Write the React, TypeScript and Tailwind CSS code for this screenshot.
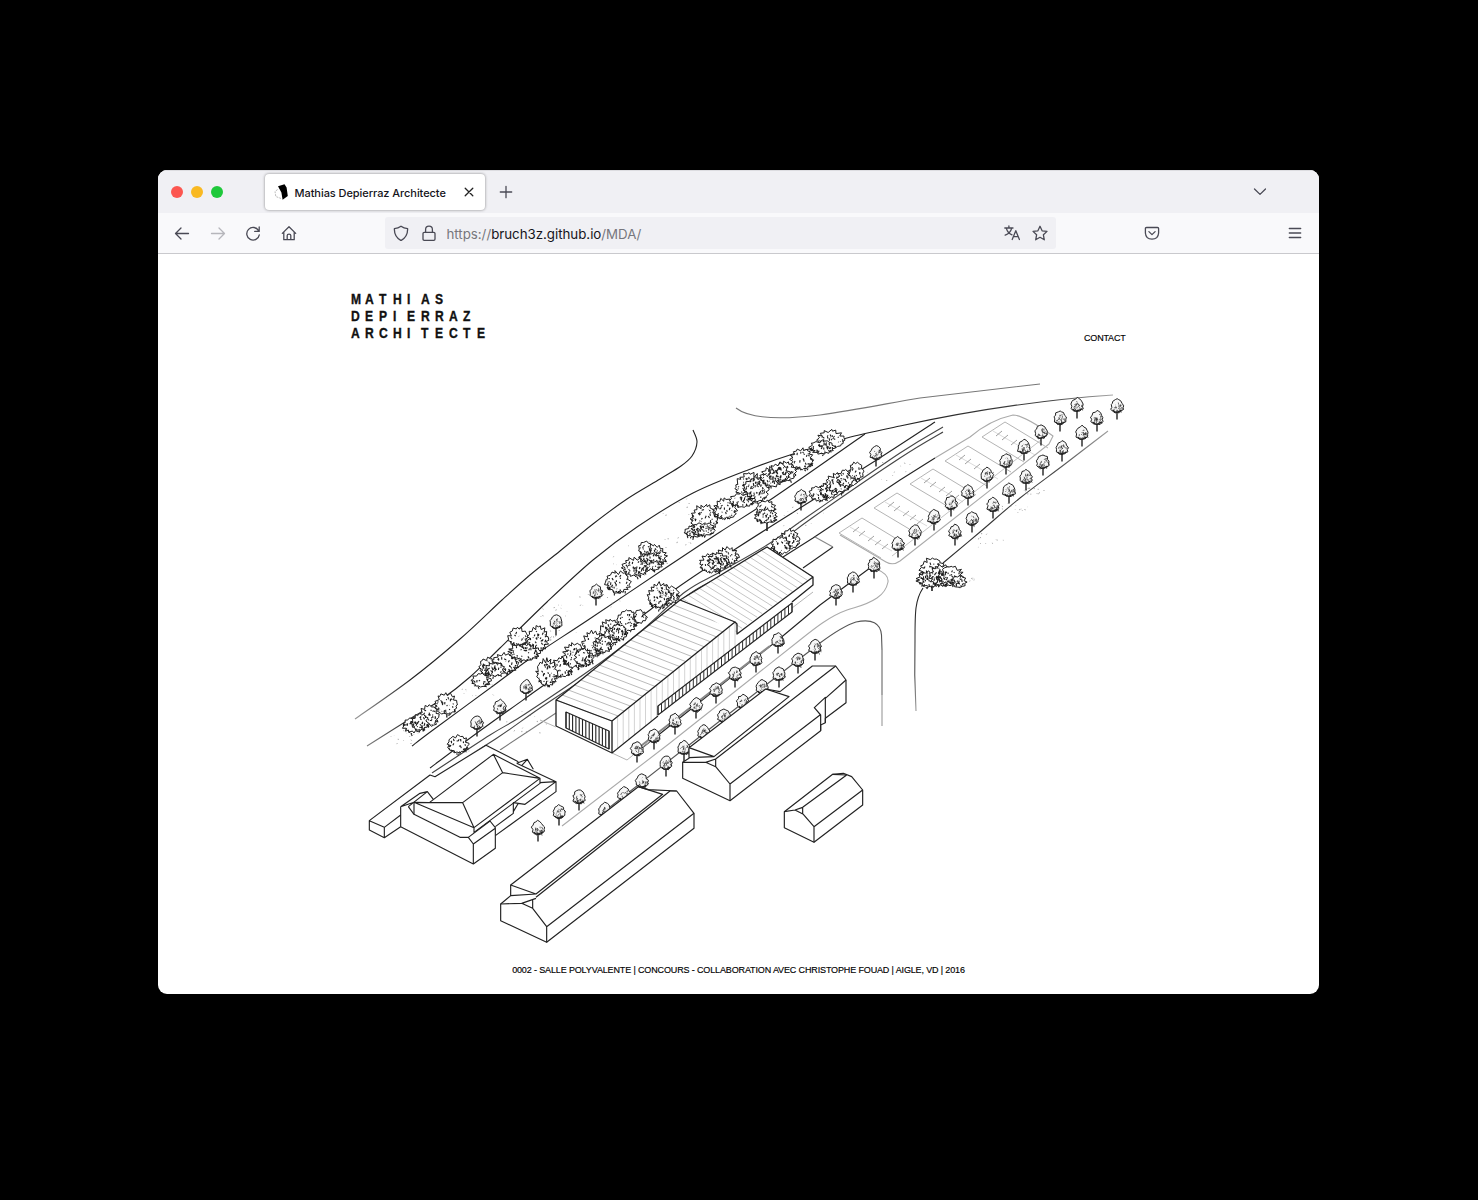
import React from "react";

type Blob = [number, number, number, number];
type Pt = [number, number];

function makeRandom(seed: number) {
  let s = seed;
  for (let i = 0; i < 3; i++) s = (s * 16807) % 2147483647;
  return () => {
    s = (s * 16807) % 2147483647;
    return s / 2147483647;
  };
}

const n = (v: number) => v.toFixed(1);

/* Small street trees, given by the centre of the crown. */
const treesBack: Pt[] = [
  [876, 453], [1077, 405], [1060, 418], [1117, 406], [1097, 418], [1082, 433], [1041, 432], [1062, 448],
  [1024, 447], [1043, 462], [1006, 461], [1026, 477], [987, 475], [1009, 490], [968, 492], [993, 505],
  [951, 503], [972, 519], [934, 517], [955, 532], [915, 532], [898, 544], [874, 565], [853, 579],
  [836, 592], [801, 497], [596, 592], [556, 622], [526, 687], [500, 707], [477, 723], [778, 640],
  [756, 659], [735, 674], [716, 690], [696, 705], [675, 721], [654, 736], [637, 749], [815, 647],
  [798, 660], [779, 674], [762, 687], [743, 702], [724, 716], [704, 732], [684, 748], [666, 763],
  [642, 781], [624, 794], [605, 810], [579, 797], [559, 812], [538, 828],
];

/* Bushes as overlapping clumps: centre and radii. */
const bushes: Blob[] = [
  [429, 717, 9, 10], [413, 726, 10, 7], [420, 723, 8, 8], [446, 705, 11, 10], [458, 745, 10, 8],
  [488, 667, 8, 8], [505, 664, 13, 9], [495, 670, 10, 6], [481, 681, 9, 6], [518, 638, 9, 9], [538, 640, 10, 12], [524, 653, 15, 8],
  [562, 668, 10, 9], [547, 674, 10, 13], [575, 657, 12, 12], [593, 645, 10, 12], [584, 658, 9, 8], [611, 633, 11, 12], [603, 645, 9, 8],
  [627, 622, 10, 10], [618, 633, 9, 7], [640, 617, 6, 6], [667, 596, 12, 9], [659, 597, 11, 12], [727, 557, 11, 8], [712, 564, 12, 9], [718, 562, 10, 8],
  [653, 557, 13, 11], [645, 549, 6, 6], [650, 563, 12, 8], [635, 568, 12, 9], [618, 583, 12, 10], [790, 540, 9, 9], [781, 546, 9, 8],
  [704, 520, 13, 13], [694, 532, 9, 5], [703, 530, 11, 6], [725, 510, 11, 10], [750, 488, 14, 13], [756, 491, 12, 11], [742, 501, 12, 6],
  [785, 472, 11, 9], [772, 478, 11, 9], [779, 474, 10, 9], [802, 460, 11, 10], [831, 440, 13, 8], [822, 448, 12, 6],
  [820, 494, 10, 7], [829, 491, 9, 7], [838, 484, 12, 9], [847, 479, 10, 8], [856, 472, 7, 8], [766, 510, 9, 8], [766, 517, 11, 6],
  [932, 571, 12, 11], [930, 580, 13, 7], [942, 577, 12, 10], [951, 577, 12, 9], [959, 582, 7, 5],
];

/* Scattered dots of grass, centre and spread. */
const grass: Blob[] = [
  [405, 738, 18, 8], [480, 690, 24, 7], [555, 612, 20, 8], [600, 600, 26, 8], [690, 510, 30, 12], [530, 722, 30, 12],
  [640, 560, 30, 20], [965, 580, 12, 5], [985, 540, 20, 8], [1015, 508, 16, 6], [1035, 490, 12, 5], [800, 515, 30, 14],
  [890, 470, 25, 12], [480, 750, 18, 8], [560, 635, 20, 6], [670, 545, 25, 10],
];

function outline(cx: number, cy: number, rx: number, ry: number, seed: number, steps: number, rough: number) {
  const r = makeRandom(seed);
  let d = "";
  for (let i = 0; i < steps; i++) {
    const a = (i / steps) * Math.PI * 2 + (r() - 0.5) * 0.18;
    const up = Math.sin(a) < 0 ? 1.12 : 0.9;
    const k = 1.06 - (i % 2) * rough * (0.4 + r() * 1.1) - r() * 0.12;
    d += `${i ? "L" : "M"}${n(cx + Math.cos(a) * rx * k)} ${n(cy + Math.sin(a) * ry * k * up)}`;
  }
  return d + "Z";
}

function speckle(cx: number, cy: number, rx: number, ry: number, seed: number, count: number, size: number) {
  const r = makeRandom(seed);
  let d = "";
  for (let i = 0; i < count; i++) {
    const a = r() * Math.PI * 2;
    const k = Math.pow(r(), 0.4) * 0.95;
    const dx = (r() - 0.5) * size;
    d += `M${n(cx + Math.cos(a) * rx * k)} ${n(cy + Math.sin(a) * ry * k)}l${n(dx)} ${n(r() * size)}`;
  }
  return d;
}

/* Smooth curve through the given points. */
function smooth(p: Pt[]) {
  let d = `M${p[0][0]} ${p[0][1]}`;
  for (let i = 0; i < p.length - 1; i++) {
    const a = p[i - 1] ?? p[i];
    const b = p[i];
    const c = p[i + 1];
    const e = p[i + 2] ?? c;
    d += `C${n(b[0] + (c[0] - a[0]) / 6)} ${n(b[1] + (c[1] - a[1]) / 6)} ${n(c[0] - (e[0] - b[0]) / 6)} ${n(c[1] - (e[1] - b[1]) / 6)} ${c[0]} ${c[1]}`;
  }
  return d;
}

function crown(x: number, y: number, seed: number) {
  const r = makeRandom(seed);
  const shape: Pt[] = [
    [0, -7.4], [2, -6.4], [4, -5], [4.8, -2.6], [6.2, -0.6], [5.6, 1.4], [6, 3.4], [4.2, 4.8], [2.6, 6.2],
    [0.4, 5.8], [-2.4, 6.4], [-4.2, 5], [-6, 3.8], [-5.4, 1.2], [-6.2, -1], [-4.8, -2.8], [-4, -5], [-1.8, -6.2],
  ];
  return "M" + shape.map(([a, b]) => `${n(x + a + (r() - 0.5) * 1.1)} ${n(y + b + (r() - 0.5) * 1.1)}`).join("L") + "Z";
}

function Tree({ x, y, i }: { x: number; y: number; i: number }) {
  return (
    <g stroke="#222">
      <path d={`M${x} ${y + 3}V${y + 13.5}`} strokeWidth="1.4" />
      <path d={crown(x, y, 91 + i * 37)} fill="#f7f7f7" strokeWidth="1" />
      <path d={speckle(x + 1.4, y + 1, 4.4, 5.2, 53 + i * 71, 26, 2.8)} strokeWidth=".65" />
      <path d={`M${x - 4.5} ${y + 4}L${x - 2} ${y + 5.8}L${x} ${y + 6.4}L${x + 4.5} ${y + 4}`} strokeWidth="1.3" />
    </g>
  );
}

/* Outlines go down first so that the leaf marks of neighbouring clumps merge. */
function Bushes() {
  return (
    <g stroke="#1c1c1c">
      {bushes.map(([x, y, rx, ry], i) => (
        <path
          key={`o${i}`}
          d={outline(x, y, rx + 1, ry + 1, 17 + i * 131, Math.round((rx + ry) * 1.5), 0.2)}
          fill="#fff"
          strokeWidth="1"
        />
      ))}
      {bushes.map(([x, y, rx, ry], i) => (
        <path key={`s${i}`} d={speckle(x, y + 1, rx, ry, 29 + i * 61, Math.round(rx * ry * 0.34), 2.7)} strokeWidth="1.1" />
      ))}
    </g>
  );
}

const lerp = (a: Pt, b: Pt, t: number): Pt => [a[0] + (b[0] - a[0]) * t, a[1] + (b[1] - a[1]) * t];

/* Parallel segments that sweep from the edge a-b to the edge c-d. */
function hatch(a: Pt, b: Pt, c: Pt, d: Pt, count: number) {
  let s = "";
  for (let i = 0; i <= count; i++) {
    const p = lerp(a, b, i / count);
    const q = lerp(c, d, i / count);
    s += `M${n(p[0])} ${n(p[1])}L${n(q[0])} ${n(q[1])}`;
  }
  return s;
}

function ParkingLot({ x, y }: { x: number; y: number }) {
  return (
    <g stroke="#b4b4b4" strokeWidth="1">
      <path d={`M${x + 43} ${y + 26}L${x} ${y}L${x - 23} ${y + 15}L${x + 19} ${y + 40}`} />
      <path d={`M${x - 12} ${y + 9}L${x + 30} ${y + 33}`} strokeWidth=".5" />
      <path
        d={`M${x - 9} ${y + 14}l6 -5M${x - 3} ${y + 18}l6 -5M${x + 6} ${y + 23}l6 -5M${x + 13} ${y + 27}l6 -5M${x + 20} ${y + 31}l6 -5`}
        stroke="#888"
        strokeWidth=".8"
      />
    </g>
  );
}

function Axonometry() {
  return (
    <svg viewBox="350 375 780 575" className="block h-[575px] w-[780px]" fill="none" stroke="#222" strokeWidth="1.1" strokeLinejoin="round">
      <defs>
        <linearGradient id="south" gradientUnits="userSpaceOnUse" x1="0" y1="600" x2="0" y2="726">
          <stop offset="0" stopColor="#222" />
          <stop offset=".6" stopColor="#555" />
          <stop offset="1" stopColor="#bbb" />
        </linearGradient>
        <linearGradient id="west" gradientUnits="userSpaceOnUse" x1="355" y1="0" x2="500" y2="0">
          <stop offset="0" stopColor="#999" />
          <stop offset=".4" stopColor="#222" />
        </linearGradient>
        <linearGradient id="east" gradientUnits="userSpaceOnUse" x1="900" y1="0" x2="1115" y2="0">
          <stop offset="0" stopColor="#222" />
          <stop offset=".7" stopColor="#444" />
          <stop offset="1" stopColor="#aaa" />
        </linearGradient>
      </defs>

      {/* Roads */}
      <path stroke="url(#west)" d={smooth([[355, 719], [410, 680], [460, 639], [502, 600], [530, 575], [560, 551], [593, 524], [627, 499], [660, 479], [681, 466], [692, 456], [697, 442], [693, 430]])} />
      <path stroke="url(#west)" d={smooth([[367, 746], [413, 717], [442, 699], [470, 677], [500, 648], [547, 602], [593, 560], [637, 527], [693, 493], [753, 468], [793, 454], [847, 438], [900, 426]])} />
      <path stroke="url(#east)" d="M900 426C960 413 1040 400 1113 395" />
      <path stroke="url(#west)" d={smooth([[412, 746], [433, 730], [497, 683], [535, 655], [588, 620], [670, 565], [720, 532], [773, 498], [865, 434]])} />
      <path stroke="url(#west)" d={smooth([[430, 768], [477, 733], [537, 690]])} />
      <path d={smooth([[537, 690], [594, 650], [650, 610], [677, 588], [737, 548], [800, 508], [875, 461], [935, 422]])} />
      <path stroke="#444" d={smooth([[432, 773], [490, 735], [525, 714], [600, 663], [640, 632], [685, 592], [720, 572], [767, 545], [807, 517], [900, 453], [943, 427]])} />
      <path stroke="#444" d={smooth([[435, 777], [497, 738], [540, 708], [600, 668], [642, 636], [688, 595], [722, 576], [770, 549], [812, 518], [900, 458], [943, 432]])} />
      <path d="M783 557L813 538L900 480L935 458" />
      <path stroke="#aaa" d="M935 458L970 437Q990 420 1013 415Q1024 415 1053 436L1049 444L900 561Q893 566 886 562L840 535" />
      <path stroke="#bbb" strokeWidth=".9" d="M1041 440L892 556" />
      <path stroke="#777" d="M736 408C750 419 780 420 820 415C855 410 890 403 920 398L1040 384" />
      <path stroke="url(#east)" d={smooth([[1108, 431], [1065, 464], [1020, 498], [980, 532], [943, 563]])} />
      <path stroke="url(#south)" d="M923 588C915 600 915 612 915 640Q914 675 916 711" />
      <path d="M874 565L820 605L778 640L735 674L637 752" />
      <path stroke="#888" strokeWidth="2.2" d="M770 646L735 673L637 749" />
      <path stroke="#aaa" d="M876 569Q889 574 888 582Q886 592 877 598C865 606 855 607 847 610C830 616 815 628 800 640L670 743L562 826" />
      <path stroke="#555" d="M605 811L684 749L762 688L820 643Q843 626 856 622Q880 617 881.5 635L882 650" />
      <path stroke="#666" d="M882 650L882 695" />
      <path stroke="#999" d="M882 695L882 726" />
      <path stroke="#777" d="M500 750L556 713" />
      <path stroke="#aaa" strokeWidth=".9" d="M540 720L556 727M612 753L627 760L658 735M813 592L792 608" />
      <path d="M803 568L833 547" />
      <path stroke="#888" d="M815 537L833 547" />

      <ParkingLot x={862} y={518} />
      <ParkingLot x={897} y={493} />
      <ParkingLot x={933} y={469} />
      <ParkingLot x={968} y={446} />
      <ParkingLot x={1005} y={422} />

      {/* Planting */}
      <g stroke="#888" strokeWidth=".8">
        {grass.map((g, i) => (
          <path key={i} d={speckle(g[0], g[1], g[2], g[3], 400 + i * 83, 13, 1.3)} />
        ))}
      </g>
      <path d="M767 520V531M932 585V591" strokeWidth="1.6" />
      {treesBack.map(([x, y], i) => (
        <Tree key={i} x={x} y={y} i={i} />
      ))}
      <Bushes />

      {/* Hall */}
      <path fill="#fff" d="M556 700L680 600L767 547L813 577V585L792 602V612L612 753L556 726Z" stroke="none" />
      <path stroke="#b2b2b2" strokeWidth=".9" d={hatch([556, 700], [680, 600], [612, 721], [735, 622], 20)} />
      <path stroke="#c0c0c0" strokeWidth=".9" d={hatch([683, 599], [767, 547], [737, 632], [813, 577], 15)} />
      <path fill="#fff" stroke="none" d="M683 600L735 622V632L737 636Z" />
      <path stroke="#c8c8c8" strokeWidth=".8" d={hatch([612, 721], [735, 622], [612, 753], [735, 654], 22)} />
      <path fill="#fff" stroke="none" d="M658 706L792 603V612L658 715Z" />
      <path stroke="#333" strokeWidth="1" d={hatch([658, 706], [792, 603], [658, 715], [792, 612], 38)} />
      <path d="M658 706L792 603V612L658 715Z" />
      <path strokeWidth="1.3" d="M556 700L680 600L735 622L612 721ZM556 700V726M612 721V753" />
      <path d="M556 726L612 753L658 716" />
      <path strokeWidth="1.3" d="M680 600L767 547L813 577V585L792 602M735 622L737 624V634L813 577" />
      <path d="M566 712L609 731V749L566 728Z" />
      <path strokeWidth="1.1" d={hatch([566, 712], [609, 731], [566, 728], [609, 749], 13)} />

      {/* Hipped-roof house */}
      <g transform="translate(340 640) scale(.33333)" strokeWidth="3.4">
        <path fill="#fff" stroke="none" d="M88 542L270 405L438 316L562 358L648 425V455L400 672L182 560L133 593L88 570Z" />
        <path d="M88 542L270 405L285 410L438 316L535 365M88 542L133 562V593L88 570ZM133 562L182 525M133 593L182 560" />
        <path d="M182 500V560L400 672L466 625V563L450 543M400 672V612M182 500L240 460L262 455L280 478M182 500L222 487M205 500L222 523L360 592L385 592L400 612L466 565M262 455L205 500" />
        <path d="M222 487L268 488L460 343L600 415L402 563ZM268 488L368 488L402 563M368 488L488 398L460 343M488 398L600 415M222 487V523M402 563V577L600 430V415" />
        <path d="M530 370L562 358L580 388M545 377L562 358M530 370L648 425V455L466 587M600 428L648 425L555 493L520 488V520L466 560M520 515L535 490M385 592L450 543" />
      </g>

      {/* Long house */}
      <g transform="translate(490 740) scale(.33333)" strokeWidth="3.5">
        <path fill="#fff" d="M62 435L445 140L475 149L560 153L612 220V265L170 607L32 542V492L62 467Z" />
        <path d="M62 435L138 462L518 163L445 140M62 467L138 462M138 472L540 153L560 153M32 492L95 490L138 475M95 490L128 505L170 560V607M128 480V505M170 560L612 220" />
      </g>

      {/* House with the step, and the small one */}
      <g transform="translate(670 620) scale(.33333)" strokeWidth="3.5">
        <path fill="#fff" d="M57 383L287 207L330 215L427 138H497L528 180V248L466 295V308L452 315V332L180 542L38 475V427L57 415Z" />
        <path d="M57 383L132 410L357 230L287 207M57 413L132 410M38 427H107L137 417L497 138M107 427L137 440L180 492V542M137 417V440M180 492L450 285M452 332V285L433 263L466 232V308M466 235L528 180" />
        <path fill="#fff" d="M343 575L488 463L520 460L545 470L578 510V555L432 667L343 623Z" />
        <path d="M432 667V620L578 510M432 620L400 583L375 570L343 575M375 570L398 562L530 465M398 562V583M488 463L530 465" />
      </g>
    </svg>
  );
}

const icon = {
  fill: "none",
  stroke: "#4a4a55",
  strokeWidth: 1.3,
  strokeLinecap: "round" as const,
  strokeLinejoin: "round" as const,
};

function Icon({ d, className, stroke }: { d: string; className?: string; stroke?: string }) {
  return (
    <svg viewBox="0 0 16 16" className={`block h-4 w-4 shrink-0 ${className ?? ""}`} {...icon} stroke={stroke ?? icon.stroke}>
      <path d={d} />
    </svg>
  );
}

function LogoLine({ word }: { word: string }) {
  return (
    <div className="flex h-[17px]">
      {word.split("").map((c, i) => (
        <span key={i} className="w-[14.1px] origin-left scale-x-[.84]">
          {c}
        </span>
      ))}
    </div>
  );
}

export default function App() {
  return (
    <div className="h-[1200px] w-[1478px] overflow-hidden bg-black pt-[170px] pl-[158px]">
      <div className="flex h-[824px] w-[1161px] flex-col overflow-hidden rounded-[9px] bg-white">
        <div className="flex h-[43px] items-center border-t border-[#dcdce0] bg-[#f0f0f4] pl-[12.5px]">
          <div className="flex gap-2">
            <span className="h-3 w-3 rounded-full bg-[#fc5650]" />
            <span className="h-3 w-3 rounded-full bg-[#f9b922]" />
            <span className="h-3 w-3 rounded-full bg-[#1fc83b]" />
          </div>
          <div className="ml-[42.5px] flex h-[36px] w-[220px] items-center rounded-[4px] bg-white pl-[9px] shadow-[0_0_3px_rgba(0,0,0,0.45)]">
            <svg viewBox="0 0 16 16" className="h-4 w-4">
              <path d="M4 2.2L10.5 .3L12.6 3.6L13.8 12L8.6 15.8L7.4 8.4Z" fill="#000" />
              <path d="M3.6 5.5L1 7.5L1.8 12.5L7 14.5" fill="none" stroke="#aaa" strokeWidth=".8" strokeDasharray="2 1" />
            </svg>
            <span className="ml-[4.5px] w-[152px] pt-[2px] font-['Inter'] text-[11px] leading-4 font-medium tracking-[-0.06px] whitespace-nowrap text-[#15141a]">
              Mathias Depierraz Architecte
            </span>
            <Icon className="ml-[14px]" d="M4.2 4.2L11.8 11.8M11.8 4.2L4.2 11.8" stroke="#222" />
          </div>
          <Icon className="ml-[13px]" d="M8 2.3V13.7M2.3 8H13.7" />
          <Icon className="ml-[737.5px]" d="M2.5 5L8 10.4L13.5 5" />
        </div>

        <div className="flex h-[41px] items-center border-b border-[#c9c9cd] bg-[#f9f9fb] pl-[15.5px]">
          <Icon d="M14.5 8.5H1.5M7 3L1.5 8.5L7 14" />
          <Icon className="ml-5" d="M1.5 8.5H14.5M9 3L14.5 8.5L9 14" stroke="#b6b6bb" />
          <Icon className="ml-[19.5px]" d="M13.6 5.7A6.3 6.3 0 1 0 14.3 9.8M14.2 1.9V6.4H9.7" />
          <Icon className="ml-[19.5px]" d="M1.3 8.4L8 1.8L14.7 8.4M2.8 7.2V14.7H13.2V7.2M6.2 14.4V10.6Q6.2 9.2 8 9.2T9.8 10.6V14.4" />
          <div className="ml-[88.5px] flex h-8 w-[671px] items-center rounded-[3px] bg-[#f0f0f4] pl-[7.5px]">
            <Icon d="M8 1.2Q10.8 3.3 14.6 3.6Q15 11.3 8 15.6Q1 11.3 1.4 3.6Q5.2 3.3 8 1.2Z" />
            <Icon className="ml-[12px]" d="M3.2 7.3H12.8Q14 7.3 14 8.5V14.1Q14 15.3 12.8 15.3H3.2Q2 15.3 2 14.1V8.5Q2 7.3 3.2 7.3ZM4.6 7.3V4.5A3.4 3.4 0 0 1 11.4 4.5V7.3" />
            <span className="ml-[10px] w-[559px] pt-px font-['Inter'] text-[13.3px] leading-5 tracking-[-0.02px] whitespace-nowrap text-[#77777d]">
              https://<span className="text-[#15141a]">bruch3z.github.io</span>/MDA/
            </span>
            <Icon d="M.8 3H9M4.9 1V3M2.4 3.3Q3.5 7.8 8 9.8M7.6 3.3Q6.5 8 1.2 10.2M8.2 14.5L11.8 5.7L15.4 14.5M9.4 11.7H14.2" className="-ml-[1.5px]" />
            <Icon className="ml-[12px]" d="M8 1.3L10.1 5.8L15 6.4L11.4 9.8L12.3 14.8L8 12.3L3.7 14.8L4.6 9.8L1 6.4L5.9 5.8Z" />
          </div>
          <Icon className="ml-[88px]" d="M2.5 2.5H13.5Q14.6 2.5 14.6 3.6V8Q14.2 14.1 8 14.2Q1.8 14.1 1.4 8V3.6Q1.4 2.5 2.5 2.5ZM4.9 6.6L8 9.6L11.1 6.6" />
          <Icon className="ml-[127px]" d="M2.3 3.5H13.7M2.3 8H13.7M2.3 12.5H13.7" />
        </div>

        <div className="flex flex-1 flex-col items-center font-['Liberation_Sans']">
          <div className="mt-[37px] flex h-[84px] w-[776px] justify-between">
            <h1 className="text-[14.4px] leading-[17px] font-bold text-[#111] [-webkit-text-stroke:0.35px_#111]">
              <LogoLine word="MATHIAS" />
              <LogoLine word="DEPIERRAZ" />
              <LogoLine word="ARCHITECTE" />
            </h1>
            <a className="mt-[41px] mr-px text-[9px] leading-3 tracking-[-0.2px] text-black [-webkit-text-stroke:0.15px_#000]">CONTACT</a>
          </div>
          <div className="ml-[3px]">
            <Axonometry />
          </div>
          <p className="mt-[14px] text-[9px] leading-3 tracking-[-0.137px] whitespace-nowrap text-black [-webkit-text-stroke:0.15px_#000]">
            0002 - SALLE POLYVALENTE | CONCOURS - COLLABORATION AVEC CHRISTOPHE FOUAD | AIGLE, VD | 2016
          </p>
        </div>
      </div>
    </div>
  );
}
